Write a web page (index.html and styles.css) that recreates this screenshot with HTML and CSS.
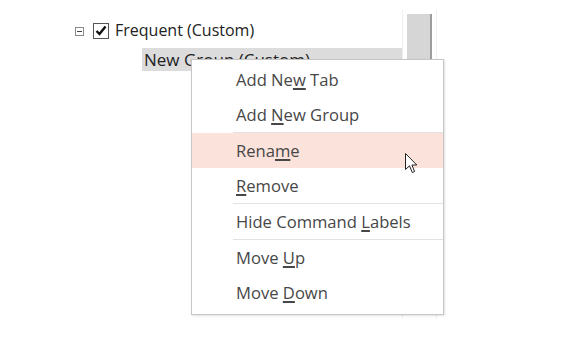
FILE: index.html
```
<!DOCTYPE html>
<html lang="en">
<head>
    <meta charset="UTF-8">
    <meta name="viewport" content="width=device-width, initial-scale=1.0">
    <title>Customize Ribbon</title>
    <link rel="stylesheet" href="styles.css">
</head>
<body>
    <div class="pane">
        <div class="tree">
            <div class="tree-row">
                <span class="toggle"></span>
                <span class="check">
                    <svg width="12" height="11" viewBox="0 0 12 11"><path d="M1.5 6 L4.5 9 L10.5 1.5" fill="none" stroke="#111" stroke-width="2.4"/></svg>
                </span>
                <span class="label">Frequent (Custom)</span>
            </div>
            <div class="tree-row child selected">
                <span class="label">New Group (Custom)</span>
            </div>
        </div>
        <div class="scrollbar">
            <div class="thumb"></div>
        </div>

        <!-- context menu over the list -->
        <ul class="menu">
            <li>Add Ne<u>w</u> Tab</li>
            <li>Add <u>N</u>ew Group</li>
            <li class="sep"></li>
            <li class="hover">Rena<u>m</u>e</li>
            <li><u>R</u>emove</li>
            <li class="sep"></li>
            <li>Hide Command <u>L</u>abels</li>
            <li class="sep"></li>
            <li>Move <u>U</u>p</li>
            <li>Move <u>D</u>own</li>
        </ul>

        <svg class="cursor" width="13" height="21" viewBox="0 0 13 21">
            <path d="M0.5 0.5 L0.5 16.5 L4.5 12.8 L7.3 19.5 L9.6 18.5 L6.9 12 L11.8 12 Z" fill="#fff" stroke="#222" stroke-width="1"/>
        </svg>
    </div>
</body>
</html>
```

FILE: styles.css
```
body {
    margin: 0;
    background: #fff;
    font-family: "Open Sans", "Noto Sans", sans-serif;
    color: #222;
}
.pane {
    position: relative;
    display: flex;
    width: 437px;
    height: 319px;
}
.tree {
    flex: 1;
    padding-top: 18px;
}
.tree-row {
    display: flex;
    align-items: center;
    height: 25px;
    font-size: 16px;
    line-height: 25px;
}
.toggle {
    width: 7px;
    height: 7px;
    margin-left: 75px;
    border: 1px solid #8a8a8a;
    position: relative;
    top: 1px;
}
.toggle::after {
    content: "";
    position: absolute;
    left: 1px;
    top: 3px;
    width: 5px;
    height: 1px;
    background: #444;
}
.check {
    display: flex;
    align-items: center;
    justify-content: center;
    width: 14px;
    height: 14px;
    margin-left: 9px;
    border: 1px solid #555;
    background: #fff;
}
.label {
    margin-left: 6px;
    white-space: nowrap;
}
.tree-row.child {
    margin-top: 5px;
    margin-left: 142px;
    height: 23px;
    line-height: 23px;
    font-size: 17px;
}
.tree-row.child .label {
    margin-left: 2px;
}
.selected {
    background: #dcdcdc;
}
.scrollbar {
    width: 33px;
    margin-top: 10px;
    border-left: 1px solid #f0f0f0;
    border-right: 1px solid #f0f0f0;
}
.thumb {
    margin: 4px 4px 0 4px;
    height: 300px;
    background: #d6d6d6;
    border-right: 2px solid #9c9c9c;
}
.menu {
    position: absolute;
    left: 191px;
    top: 59px;
    width: 253px;
    box-sizing: border-box;
    margin: 0;
    padding: 2px 0 4px;
    list-style: none;
    background: #fff;
    border: 1px solid #c6c6c6;
    box-shadow: 1px 1px 2px rgba(0,0,0,0.12);
    font-size: 16.6px;
    color: #474747;
}
.menu li {
    height: 35px;
    line-height: 35px;
    padding-left: 44px;
    white-space: nowrap;
}
.menu li u {
    text-underline-offset: 2px;
    text-decoration-thickness: 1.5px;
}
.menu li.sep {
    height: 1px;
    margin-left: 41px;
    padding: 0;
    background: #e2e2e2;
}
.menu li.hover {
    background: #fbe3dc;
}
.cursor {
    position: absolute;
    left: 405px;
    top: 153px;
}
```
